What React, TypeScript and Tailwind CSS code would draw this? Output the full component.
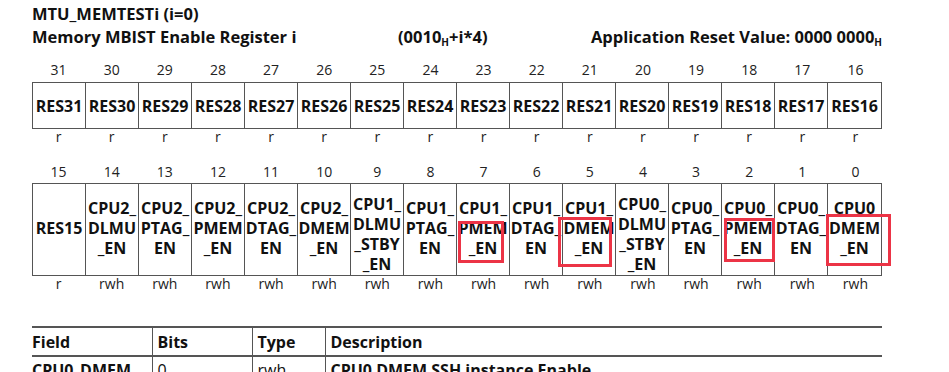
import React from 'react'

const FONT = { fontFamily: '"Open Sans", "Noto Sans", sans-serif' }

const HIGH = Array.from({ length: 16 }, (_, i) => 31 - i)

const LOW: { bit: number; lines: string[]; access: string }[] = [
  { bit: 15, lines: ['RES15'], access: 'r' },
  { bit: 14, lines: ['CPU2_', 'DLMU', '_EN'], access: 'rwh' },
  { bit: 13, lines: ['CPU2_', 'PTAG_', 'EN'], access: 'rwh' },
  { bit: 12, lines: ['CPU2_', 'PMEM', '_EN'], access: 'rwh' },
  { bit: 11, lines: ['CPU2_', 'DTAG_', 'EN'], access: 'rwh' },
  { bit: 10, lines: ['CPU2_', 'DMEM', '_EN'], access: 'rwh' },
  { bit: 9, lines: ['CPU1_', 'DLMU', '_STBY', '_EN'], access: 'rwh' },
  { bit: 8, lines: ['CPU1_', 'PTAG_', 'EN'], access: 'rwh' },
  { bit: 7, lines: ['CPU1_', 'PMEM', '_EN'], access: 'rwh' },
  { bit: 6, lines: ['CPU1_', 'DTAG_', 'EN'], access: 'rwh' },
  { bit: 5, lines: ['CPU1_', 'DMEM', '_EN'], access: 'rwh' },
  { bit: 4, lines: ['CPU0_', 'DLMU', '_STBY', '_EN'], access: 'rwh' },
  { bit: 3, lines: ['CPU0_', 'PTAG_', 'EN'], access: 'rwh' },
  { bit: 2, lines: ['CPU0_', 'PMEM', '_EN'], access: 'rwh' },
  { bit: 1, lines: ['CPU0_', 'DTAG_', 'EN'], access: 'rwh' },
  { bit: 0, lines: ['CPU0', 'DMEM', '_EN'], access: 'rwh' },
]

const COLS = 'grid grid-cols-[repeat(16,minmax(0,1fr))]'

function NumberRow({ bits, className }: { bits: number[]; className: string }) {
  return (
    <div className={`${COLS} ${className} text-[14px] leading-5 text-[#222]`}>
      {bits.map((b) => (
        <div key={b} className="text-center">{b}</div>
      ))}
    </div>
  )
}

function AccessRow({ values }: { values: string[] }) {
  return (
    <div className={`${COLS} text-[14px] leading-4 text-[#222]`}>
      {values.map((v, i) => (
        <div key={i} className="text-center">{v}</div>
      ))}
    </div>
  )
}

export default function App() {
  return (
    <div className="h-[372px] w-[949px] overflow-hidden bg-white text-[#111]" style={FONT}>
      <div className="ml-[32px] w-[850px] pt-[4px]">
        <div className="text-[16.5px] font-bold leading-5">MTU_MEMTESTi (i=0)</div>
        <div className="mt-[3px] flex text-[16.5px] font-bold leading-5">
          <span className="w-[366px]">Memory MBIST Enable Register i</span>
          <span>
            (0010<sub className="text-[10px]">H</sub>+i*4)
          </span>
          <span className="ml-auto">
            Application Reset Value: 0000 0000<sub className="text-[10px]">H</sub>
          </span>
        </div>

        <NumberRow bits={HIGH} className="mt-[13px]" />
        <div className={`${COLS} mt-[2px] h-[47px] border border-[#555]`}>
          {HIGH.map((b) => (
            <div
              key={b}
              className="flex items-center justify-center border-r border-[#555] text-[16px] font-bold last:border-r-0"
            >
              RES{b}
            </div>
          ))}
        </div>
        <AccessRow values={HIGH.map(() => 'r')} />

        <NumberRow bits={LOW.map((f) => f.bit)} className="mt-[17px]" />
        <div className="relative mt-[1px]">
          <div className={`${COLS} h-[93px] border border-[#555]`}>
            {LOW.map((f) => (
              <div
                key={f.bit}
                className={`flex flex-col items-center justify-center border-r border-[#555] text-[16px] font-bold leading-[20px] last:border-r-0 ${
                  f.lines.length > 3 ? 'pt-[9px]' : 'pb-[3px]'
                }`}
              >
                {f.lines.map((l) => (
                  <span key={l}>{l}</span>
                ))}
              </div>
            ))}
          </div>
          {/* highlight boxes drawn over the register cells */}
          <div className="absolute left-[426px] top-[38px] h-[42px] w-[46px] border-[3px] border-[#ec3446]" />
          <div className="absolute left-[526px] top-[34px] h-[50px] w-[54px] border-[3px] border-[#ec3446]" />
          <div className="absolute left-[692px] top-[35px] h-[44px] w-[51px] border-[3px] border-[#ec3446]" />
          <div className="absolute left-[794px] top-[31px] h-[52px] w-[65px] border-[3px] border-[#ec3446]" />
        </div>
        <AccessRow values={LOW.map((f) => f.access)} />

        <table className="mt-[34px] w-full border-collapse text-left text-[16px]">
          <thead>
            <tr className="h-[29px] border-y-2 border-[#555]">
              <th className="w-[120px] border-r border-[#555] pl-0 font-bold">Field</th>
              <th className="w-[100px] border-r border-[#555] pl-[5px] font-bold">Bits</th>
              <th className="w-[73px] border-r border-[#555] pl-[5px] font-bold">Type</th>
              <th className="pl-[5px] font-bold">Description</th>
            </tr>
          </thead>
          <tbody>
            <tr className="align-top leading-5">
              <td className="border-r border-[#555] pt-[3px] font-bold">CPU0_DMEM</td>
              <td className="border-r border-[#555] pl-[5px] pt-[3px]">0</td>
              <td className="border-r border-[#555] pl-[5px] pt-[3px]">rwh</td>
              <td className="pl-[5px] pt-[3px] font-bold">CPU0 DMEM SSH instance Enable</td>
            </tr>
          </tbody>
        </table>
      </div>
    </div>
  )
}
